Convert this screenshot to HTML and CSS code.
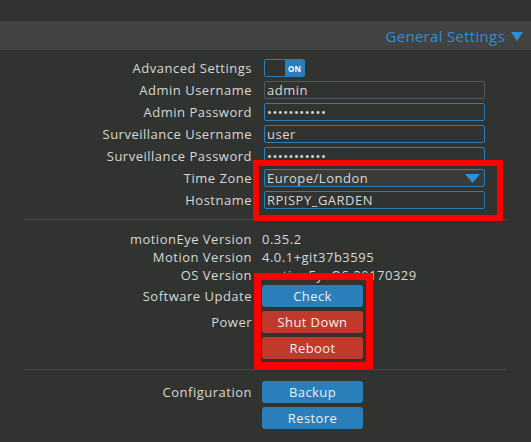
FILE: index.html
```html
<!DOCTYPE html>
<html>
<head>
<meta charset="utf-8">
<link rel="stylesheet" href="styles.css">
</head>
<body>
<div class="topgap"></div>
<div class="header">
  <span class="header-title">General Settings</span>
  <svg class="header-arrow" width="12" height="9" viewBox="0 0 12 9"><polygon points="0,0 12,0 6,9" fill="#2f8fd6"/></svg>
</div>
<div class="settings">
  <div class="row">
    <div class="label">Advanced Settings</div>
    <div class="value"><div class="toggle"><span class="toggle-off"></span><span class="toggle-on">ON</span></div></div>
  </div>
  <div class="row">
    <div class="label">Admin Username</div>
    <div class="value"><input class="field field-plain" type="text" value="admin"></div>
  </div>
  <div class="row">
    <div class="label">Admin Password</div>
    <div class="value"><input class="field" type="password" value="xxxxxxxxxxx"></div>
  </div>
  <div class="row">
    <div class="label">Surveillance Username</div>
    <div class="value"><input class="field" type="text" value="user"></div>
  </div>
  <div class="row">
    <div class="label">Surveillance Password</div>
    <div class="value"><input class="field" type="password" value="xxxxxxxxxxx"></div>
  </div>
  <div class="row">
    <div class="label">Time Zone</div>
    <div class="value"><div class="field select"><span>Europe/London</span><svg width="15" height="9" viewBox="0 0 15 9"><polygon points="0,0 15,0 7.5,9" fill="#2f8fd6"/></svg></div></div>
  </div>
  <div class="row">
    <div class="label">Hostname</div>
    <div class="value"><input class="field" type="text" value="RPISPY_GARDEN"></div>
  </div>

  <div class="sep sep-first"></div>

  <div class="info">
    <div class="irow"><div class="label">motionEye Version</div><div class="value">0.35.2</div></div>
    <div class="irow"><div class="label">Motion Version</div><div class="value">4.0.1+git37b3595</div></div>
    <div class="irow"><div class="label">OS Version</div><div class="value">motionEyeOS 20170329</div></div>
  </div>

  <div class="brow brow-first">
    <div class="label">Software Update</div>
    <div class="btns"><button class="btn blue">Check</button></div>
  </div>
  <div class="brow">
    <div class="label">Power</div>
    <div class="btns"><button class="btn red">Shut Down</button><button class="btn red">Reboot</button></div>
  </div>

  <div class="sep sep-second"></div>

  <div class="brow brow-config">
    <div class="label">Configuration</div>
    <div class="btns"><button class="btn blue">Backup</button><button class="btn blue">Restore</button></div>
  </div>
</div>

<div class="mark mark-one"></div>
<div class="mark mark-two"></div>
</body>
</html>
```

FILE: styles.css
```css
* { box-sizing: border-box; }

body {
  margin: 0;
  background: #313330;
  font-family: "Open Sans", "Noto Sans", sans-serif;
  font-size: 13px;
  letter-spacing: 0.5px;
  color: #d8d8d6;
  width: 531px;
  height: 442px;
  overflow: hidden;
  position: relative;
}

.topgap { height: 21px; }

.header {
  height: 29px;
  background: #424241;
  display: flex;
  align-items: center;
  justify-content: flex-end;
  padding-right: 8px;
  gap: 6px;
}

.header-title {
  color: #2f8fd6;
  font-size: 15px;
  letter-spacing: 0.3px;
}

.header-arrow { margin-top: 1px; }

.settings { padding-top: 7px; }

.row {
  display: grid;
  grid-template-columns: 252px 1fr;
  column-gap: 10px;
  align-items: center;
  height: 22px;
}

.label {
  text-align: right;
  white-space: nowrap;
}

.value { white-space: nowrap; }

.toggle {
  margin-left: 2px;
  width: 41px;
  height: 18px;
  border: 1px solid #2a7fba;
  border-radius: 2px;
  display: flex;
  overflow: hidden;
}

.toggle-off { width: 20px; background: #313330; }

.toggle-on {
  flex: 1;
  background: #2a7fba;
  color: #fff;
  font-size: 8px;
  font-weight: bold;
  letter-spacing: 0;
  display: flex;
  align-items: center;
  justify-content: center;
}

.field {
  display: block;
  margin-left: 2px;
  width: 221px;
  height: 18px;
  border: 1px solid #2a7fba;
  border-radius: 2px;
  background: #313330;
  color: #d8d8d6;
  font-family: inherit;
  font-size: 13px;
  letter-spacing: 0.5px;
  padding: 0 2px;
  outline: none;
}

.field-plain { border-color: #585957; }

.select {
  display: flex;
  align-items: center;
  justify-content: space-between;
  background: #3a3b39;
  padding: 0 4px 0 2px;
}

.select svg { margin-top: 1px; }

.sep {
  height: 1px;
  background: #484946;
  margin: 0 24px;
}

.sep-first { margin-top: 8px; }

.info { padding-top: 10px; }

.irow {
  display: grid;
  grid-template-columns: 252px 1fr;
  column-gap: 10px;
  height: 18px;
  line-height: 18px;
}

.brow {
  display: grid;
  grid-template-columns: 252px 1fr;
  column-gap: 10px;
  align-items: start;
  margin-top: 4px;
}

.brow .label { line-height: 22px; }

.brow-first { margin-top: 1px; }

.brow-config { margin-top: 11px; }

.sep-second { margin-top: 10px; }

.btns {
  display: flex;
  flex-direction: column;
  gap: 4px;
}

.btn {
  width: 101px;
  height: 22px;
  border: none;
  border-radius: 3px;
  color: #f0f0f0;
  font-family: inherit;
  font-size: 13px;
  letter-spacing: 0.4px;
  padding: 0;
}

.blue { background: #2a7fba; }
.red { background: #c0392b; }

.mark {
  position: absolute;
  border: 6px solid #ff0000;
}

.mark-one {
  left: 253px;
  top: 160px;
  width: 250px;
  height: 61px;
}

.mark-two {
  left: 254px;
  top: 273px;
  width: 119px;
  height: 96px;
  border-width: 7px;
}
```
